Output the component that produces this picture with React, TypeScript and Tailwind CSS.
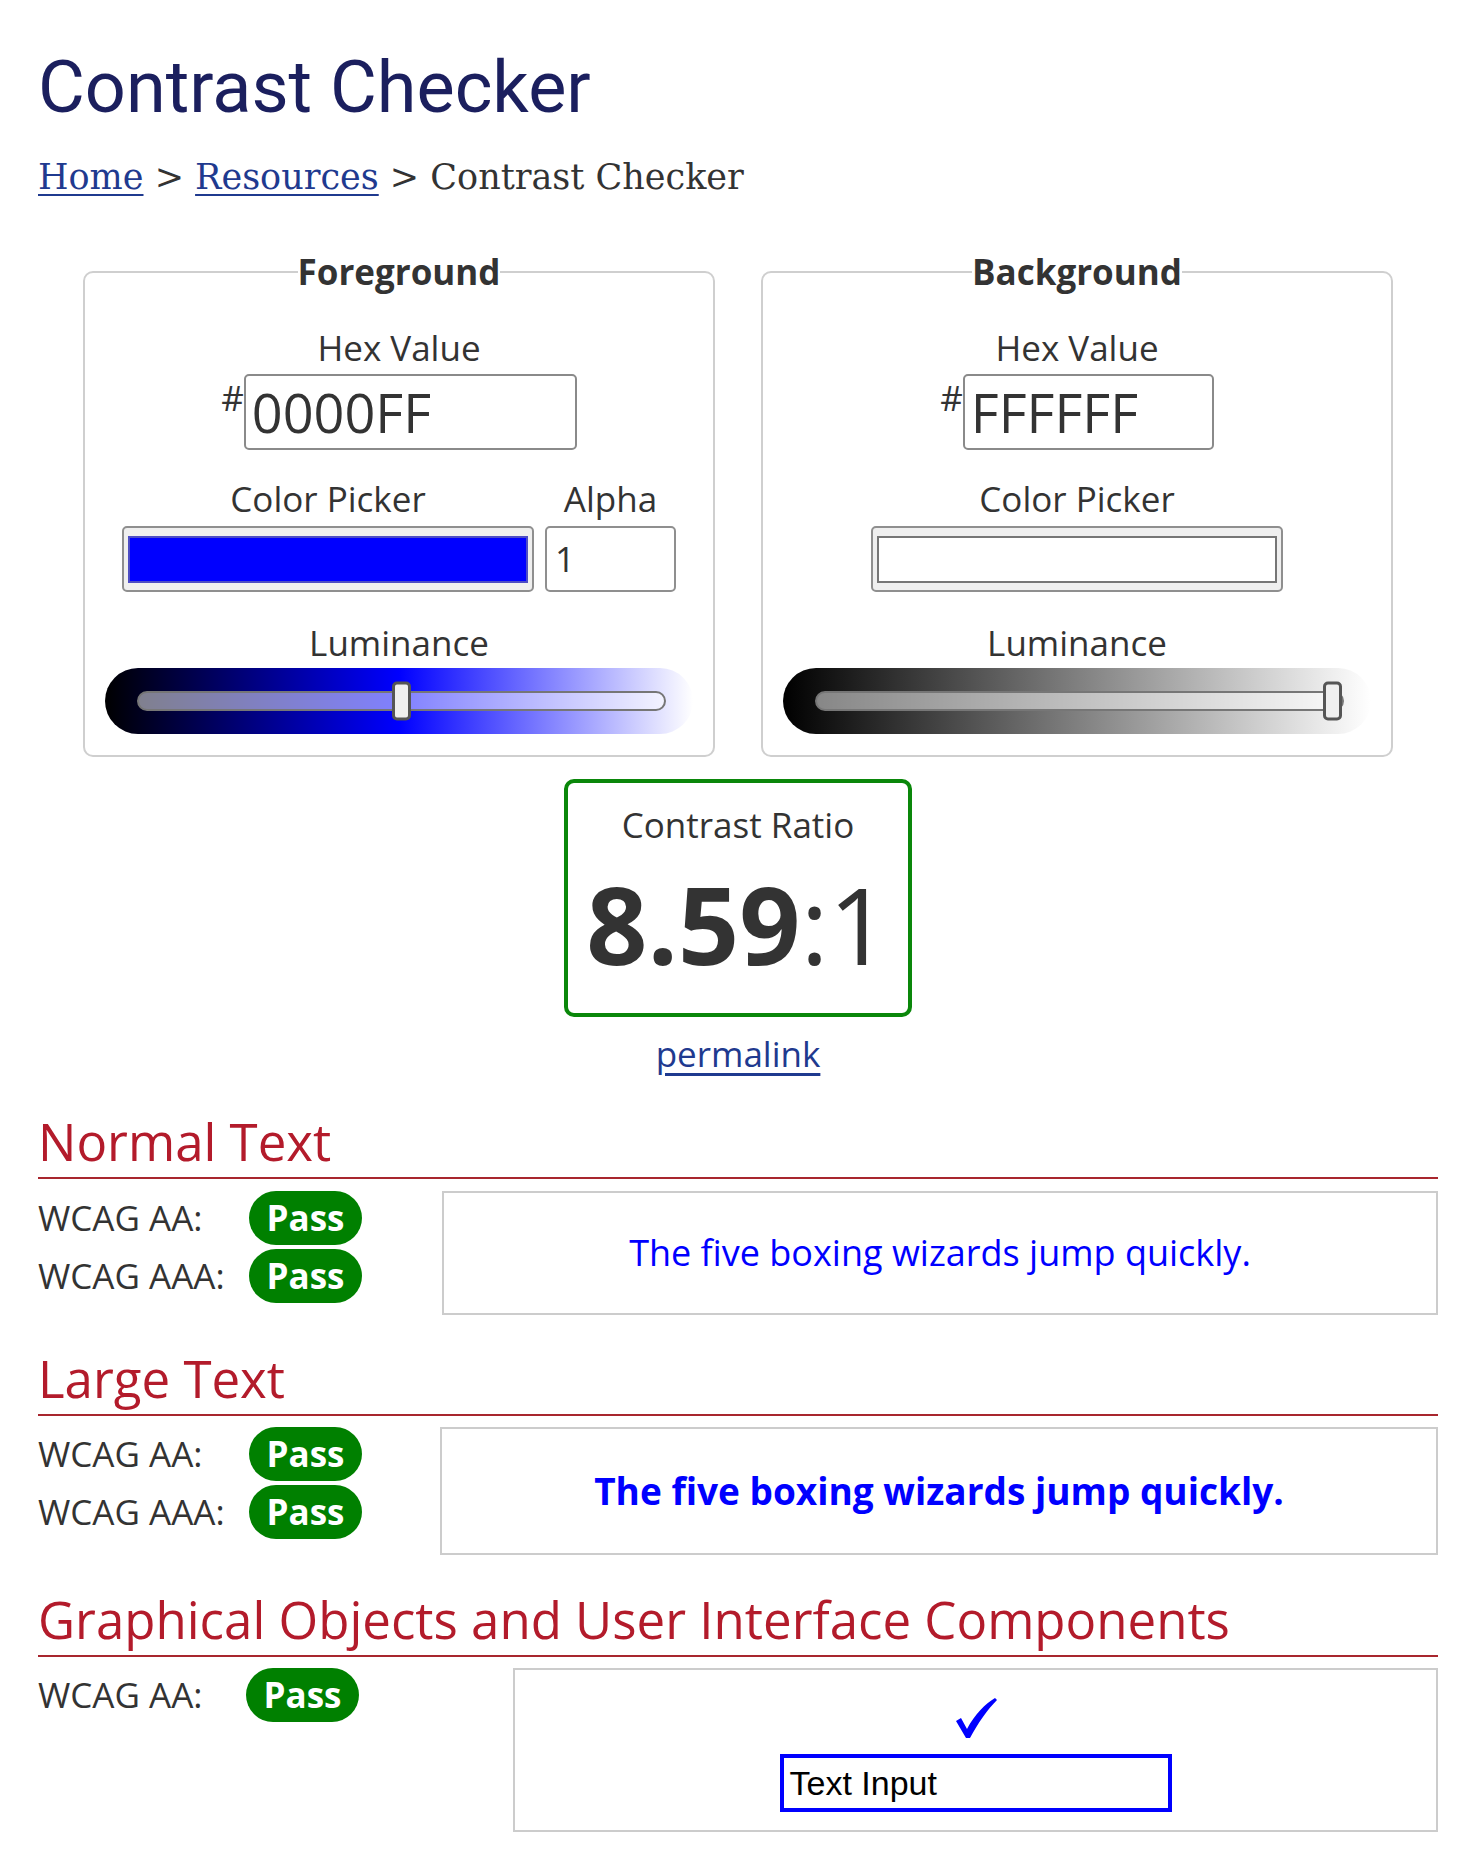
import React from 'react';

const body = "font-['Open_Sans',sans-serif] text-[#333333]";

function Slider({ track, value }: { track: string; value: number }) {
  return (
    <div className={`mx-auto flex h-[66px] w-[588px] items-center rounded-full pl-[32px] pr-[27px] ${track}`}>
      <div className="relative h-[20px] flex-1 rounded-full border-2 border-[#767676] bg-white/50">
        {/* thumb */}
        <div
          className="absolute top-1/2 h-[39px] w-[19px] -translate-y-1/2 rounded-[5px] border-[3px] border-[#555555] bg-[#efefef]"
          style={{ left: `calc((100% - 19px) * ${value})` }}
        />
      </div>
    </div>
  );
}

function Badge() {
  return (
    <span className="flex h-[54px] w-[113px] items-center justify-center rounded-full bg-[#008000] text-[35px] font-bold text-white">
      Pass
    </span>
  );
}

function Heading({ children }: { children: React.ReactNode }) {
  return (
    <h2 className="border-b-2 border-[#a8262e] pb-[6px] text-[51px] leading-[60px] text-[#b31b2b]">{children}</h2>
  );
}

function Rows({ labels, col }: { labels: string[]; col: string }) {
  return (
    <div className="flex flex-col gap-[4px]">
      {labels.map((l) => (
        <div key={l} className="flex h-[54px] items-center">
          <span className={`${col} text-[35px] leading-[48px]`}>{l}</span>
          <Badge />
        </div>
      ))}
    </div>
  );
}

export default function App() {
  return (
    <div className={`min-h-[1860px] w-[1470px] bg-white ${body}`}>
      <div className="ml-[38px] w-[1400px] pt-[45px]">
        {/* Title + breadcrumb */}
        <h1 className="font-['Roboto',sans-serif] text-[72px] leading-[86px] text-[#1b1f5e]">Contrast Checker</h1>
        <nav className="mt-[26px] font-['DejaVu_Serif',serif] text-[35px] leading-[41px] text-[#333333]">
          <a href="#" className="text-[#1f3a8f] underline decoration-2 underline-offset-[5px]">Home</a>
          {' > '}
          <a href="#" className="text-[#1f3a8f] underline decoration-2 underline-offset-[5px]">Resources</a>
          {' > Contrast Checker'}
        </nav>

        {/* Foreground / Background */}
        <div className="mt-[50px] flex justify-center gap-[46px]">
          <fieldset className="w-[632px] rounded-[10px] border-2 border-[#cfcfcf] px-[20px] pb-[21px] pt-[28px]">
            <legend className="mx-auto text-[35px] font-bold leading-[48px]">Foreground</legend>
            <div className="text-center text-[35px] leading-[48px]">Hex Value</div>
            <div className="mt-[2px] flex justify-center">
              <span className="text-[35px] leading-[48px]">#</span>
              <div className="flex h-[76px] w-[333px] items-center rounded-[5px] border-2 border-[#8a8a8a] pl-[6px] text-[54px]">0000FF</div>
            </div>
            <div className="mt-[25px] flex justify-center gap-[11px]">
              <div className="flex flex-col items-center">
                <div className="text-[35px] leading-[48px]">Color Picker</div>
                <div className="mt-[3px] flex h-[66px] w-[412px] items-center rounded-[5px] border-2 border-[#8f8f8f] bg-[#efefef] px-[4px]">
                  <div className="h-[47px] w-full border-2 border-[#4d4dc4] bg-[#0000ff]" />
                </div>
              </div>
              <div className="flex flex-col items-center">
                <div className="text-[35px] leading-[48px]">Alpha</div>
                <div className="mt-[3px] flex h-[66px] w-[131px] items-center rounded-[5px] border-2 border-[#8f8f8f] pl-[8px] text-[35px]">1</div>
              </div>
            </div>
            <div className="mt-[27px] text-center text-[35px] leading-[48px]">Luminance</div>
            <div className="mt-[1px]">
              <Slider track="bg-[linear-gradient(to_right,#000000_0%,#0000ff_50%,#ffffff_100%)]" value={0.5} />
            </div>
          </fieldset>

          <fieldset className="w-[632px] rounded-[10px] border-2 border-[#cfcfcf] px-[20px] pb-[21px] pt-[28px]">
            <legend className="mx-auto text-[35px] font-bold leading-[48px]">Background</legend>
            <div className="text-center text-[35px] leading-[48px]">Hex Value</div>
            <div className="mt-[2px] flex justify-center">
              <span className="text-[35px] leading-[48px]">#</span>
              <div className="flex h-[76px] w-[251px] items-center rounded-[5px] border-2 border-[#8a8a8a] pl-[6px] text-[54px]">FFFFFF</div>
            </div>
            <div className="mt-[25px] flex flex-col items-center">
              <div className="text-[35px] leading-[48px]">Color Picker</div>
              <div className="mt-[3px] flex h-[66px] w-[412px] items-center rounded-[5px] border-2 border-[#8f8f8f] bg-[#efefef] px-[4px]">
                <div className="h-[47px] w-full border-2 border-[#767676] bg-white" />
              </div>
            </div>
            <div className="mt-[27px] text-center text-[35px] leading-[48px]">Luminance</div>
            <div className="mt-[1px]">
              <Slider track="bg-[linear-gradient(to_right,#000000,#ffffff)]" value={1} />
            </div>
          </fieldset>
        </div>

        {/* Ratio */}
        <div className="mx-auto mt-[22px] h-[238px] w-[348px] rounded-[10px] border-4 border-[#0a870a] pt-[18px] text-center">
          <div className="text-[35px] leading-[48px]">Contrast Ratio</div>
          <div className="mt-[21px] text-[107px] leading-[107px]">
            <span className="font-bold">8.59</span>:1
          </div>
        </div>
        <div className="mt-[13px] text-center text-[35px] leading-[48px]">
          <a href="#" className="text-[#1f3a8f] underline underline-offset-[6px]">permalink</a>
        </div>

        {/* Normal text */}
        <section className="mt-[33px]">
          <Heading>Normal Text</Heading>
          <div className="mt-[12px] flex">
            <div className="w-[404px]">
              <Rows labels={['WCAG AA:', 'WCAG AAA:']} col="w-[211px]" />
            </div>
            <div className="flex h-[124px] flex-1 items-center justify-center border-2 border-[#cccccc] text-[36px] text-[#0000ff]">
              The five boxing wizards jump quickly.
            </div>
          </div>
        </section>

        {/* Large text */}
        <section className="mt-[33px]">
          <Heading>Large Text</Heading>
          <div className="mt-[11px] flex">
            <div className="w-[402px]">
              <Rows labels={['WCAG AA:', 'WCAG AAA:']} col="w-[211px]" />
            </div>
            <div className="flex h-[128px] flex-1 items-center justify-center border-2 border-[#cccccc] text-[37px] font-bold text-[#0000ff]">
              The five boxing wizards jump quickly.
            </div>
          </div>
        </section>

        {/* Graphical objects */}
        <section className="mt-[34px]">
          <Heading>Graphical Objects and User Interface Components</Heading>
          <div className="mt-[11px] flex">
            <div className="w-[475px]">
              <Rows labels={['WCAG AA:']} col="w-[208px]" />
            </div>
            <div className="flex h-[164px] flex-1 flex-col items-center border-2 border-[#cccccc] pt-[28px]">
              <svg width="42" height="40" viewBox="0 0 42 40" aria-hidden="true">
                <path d="M1 23 L6 20 L12 31 C20 16 30 6 40 0 L42 2 C32 12 23 25 15 40 L11 40 Z" fill="#0000ff" />
              </svg>
              <div className="mt-[16px] flex h-[58px] w-[392px] items-center border-4 border-[#0000ff] px-[6px] font-['Liberation_Sans',sans-serif] text-[34px] text-black">
                Text Input
              </div>
            </div>
          </div>
        </section>
      </div>
    </div>
  );
}
